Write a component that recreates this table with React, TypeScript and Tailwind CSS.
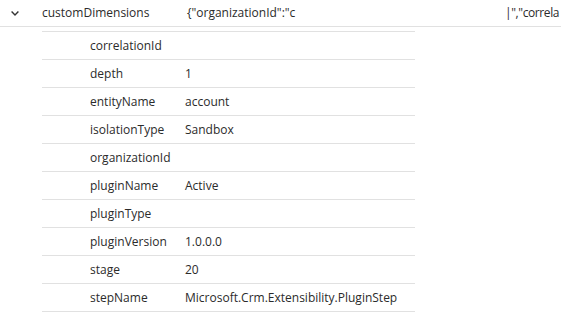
const rows: [string, string][] = [
  ['correlationId', ''],
  ['depth', '1'],
  ['entityName', 'account'],
  ['isolationType', 'Sandbox'],
  ['organizationId', ''],
  ['pluginName', 'Active'],
  ['pluginType', ''],
  ['pluginVersion', '1.0.0.0'],
  ['stage', '20'],
  ['stepName', 'Microsoft.Crm.Extensibility.PluginStep'],
]

export default function App() {
  return (
    <div className="w-[561px] h-[316px] overflow-hidden bg-white text-[12px] text-[#2b2b2b] font-['Open_Sans',sans-serif]">
      <div className="flex items-center h-[27px] border-b border-[#e1e1e1] whitespace-nowrap">
        <div className="w-[42px] shrink-0 pl-[11px]">
          <svg width="8" height="5" viewBox="0 0 8 5" className="block">
            <path d="M0.6 0.6 L4 4 L7.4 0.6" fill="none" stroke="#333" strokeWidth="1.4" />
          </svg>
        </div>
        <div className="w-[145px] shrink-0">customDimensions</div>
        <div className="w-[318px] shrink-0">{'{"organizationId":"c'}</div>
        <div className="min-w-0 tracking-[-0.4px]">{'|","correla'}</div>
      </div>

      <div className="ml-[42px] w-[373px] mt-[4px] border-t border-[#e1e1e1]">
        {rows.map(([k, v]) => (
          <div key={k} className="flex items-center h-[28px] border-b border-[#e1e1e1] whitespace-nowrap">
            <div className="w-[143px] shrink-0 pl-[48px]">{k}</div>
            <div>{v}</div>
          </div>
        ))}
      </div>
    </div>
  )
}
